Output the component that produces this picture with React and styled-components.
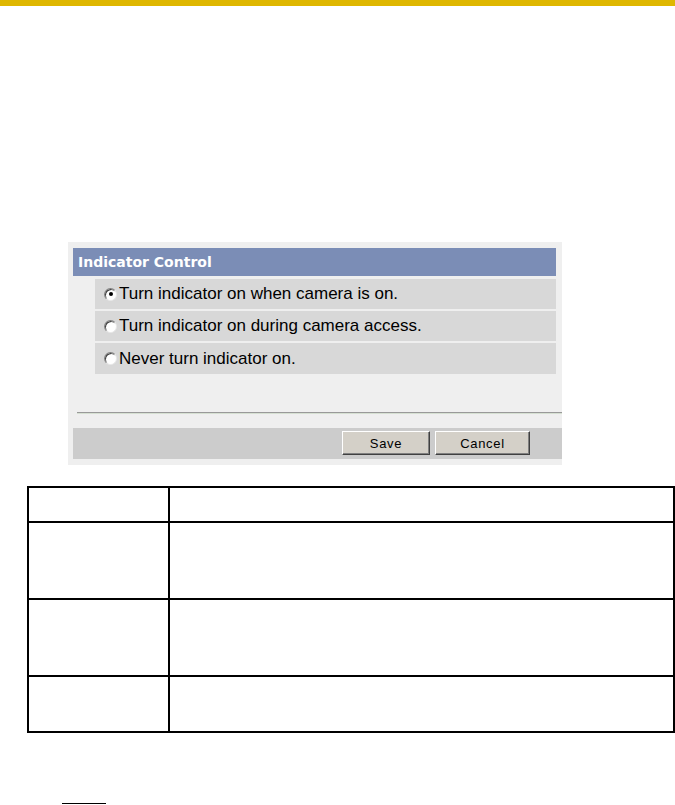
import styled, { createGlobalStyle } from "styled-components"

const Global = createGlobalStyle`
    html, body {
        margin: 0;
        padding: 0;
        background: #ffffff;
    }
    body {
        font-family: "Liberation Sans", Arial, sans-serif;
        color: #000;
    }
`

const Page = styled.div`
    width: 675px;
    height: 805px;
    overflow: hidden;
    display: flex;
    flex-direction: column;
`

const TopBar = styled.div`
    height: 6px;
    width: 100%;
    background-color: #dfb700;
`

const Panel = styled.div`
    box-sizing: border-box;
    margin: 236px 0 0 68px;
    width: 494px;
    height: 223px;
    padding: 6px 0 0 5px;
    background-color: #efefef;
    display: flex;
    flex-direction: column;
    overflow: hidden;
`

const PanelTitle = styled.div`
    box-sizing: border-box;
    width: 483px;
    height: 28px;
    padding-left: 5px;
    display: flex;
    align-items: center;
    background-color: #7b8db6;
    color: #ffffff;
    font-family: "DejaVu Sans", Verdana, sans-serif;
    font-weight: bold;
    font-size: 14px;
`

const OptionList = styled.div`
    margin: 3px 0 0 22px;
    width: 461px;
    display: flex;
    flex-direction: column;
    gap: 2px;
`

const OptionRow = styled.label`
    box-sizing: border-box;
    height: ${props => props.tall ? '31px' : '30px'};
    padding-left: 9px;
    display: flex;
    align-items: center;
    gap: 2px;
    background-color: #d8d8d8;
    font-size: 17px;
    color: #000;
`

const Radio = styled.span`
    box-sizing: border-box;
    position: relative;
    width: 13px;
    height: 13px;
    border-radius: 50%;
    background: #ffffff;
    border: 1px solid;
    border-color: #808080 #e8e8e8 #e8e8e8 #808080;
    box-shadow: inset 1px 1px 0 #404040;
    flex-shrink: 0;

    &::after {
        content: '';
        display: ${props => props.checked ? 'block' : 'none'};
        position: absolute;
        left: 3.5px;
        top: 3.5px;
        width: 4px;
        height: 4px;
        border-radius: 50%;
        background: #000;
    }
`

const Divider = styled.div`
    margin: 38px 0 0 4px;
    height: 1px;
    border-top: 1px solid #999999;
    background-color: #d6e0d2;
`

const ButtonBar = styled.div`
    box-sizing: border-box;
    margin-top: 14px;
    height: 31px;
    padding: 3px 32px 0 0;
    display: flex;
    justify-content: flex-end;
    align-items: flex-start;
    gap: 5px;
    background-color: #cccccc;
`

const Button = styled.button`
    box-sizing: border-box;
    width: ${props => props.w}px;
    height: 24px;
    padding: 0;
    background-color: #d4d0c8;
    border: 1px solid;
    border-color: #ffffff #404040 #404040 #ffffff;
    box-shadow: inset -1px -1px 0 #808080;
    font-family: "Liberation Sans", Arial, sans-serif;
    font-size: 13px;
    letter-spacing: 0.7px;
    color: #000;
`

const InfoTable = styled.table`
    margin: 21px 0 0 27px;
    width: 648px;
    border-collapse: collapse;
    table-layout: fixed;
`

const Cell = styled.td`
    border: 2px solid #000;
    height: ${props => props.h}px;
    padding: 0;
    &:first-child {
        width: 139px;
    }
`

const FootLine = styled.div`
    margin: 70px 0 0 62px;
    width: 44px;
    height: 1px;
    background-color: #000;
`

const options = [
    { label: 'Turn indicator on when camera is on.', checked: true },
    { label: 'Turn indicator on during camera access.' },
    { label: 'Never turn indicator on.', tall: true },
]

const rows = [33, 75, 75, 54]

const App = () => {
    return (
        <Page>
            <Global />
            <TopBar />
            <Panel>
                <PanelTitle>Indicator Control</PanelTitle>
                <OptionList>
                    {options.map(opt => (
                        <OptionRow key={opt.label} tall={opt.tall}>
                            <Radio checked={opt.checked} />
                            {opt.label}
                        </OptionRow>
                    ))}
                </OptionList>
                <Divider />
                <ButtonBar>
                    <Button w={88}>Save</Button>
                    <Button w={95}>Cancel</Button>
                </ButtonBar>
            </Panel>
            <InfoTable>
                <tbody>
                    {rows.map((h, i) => (
                        <tr key={i}>
                            <Cell h={h} />
                            <Cell h={h} />
                        </tr>
                    ))}
                </tbody>
            </InfoTable>
            <FootLine />
        </Page>
    )
}

export default App
